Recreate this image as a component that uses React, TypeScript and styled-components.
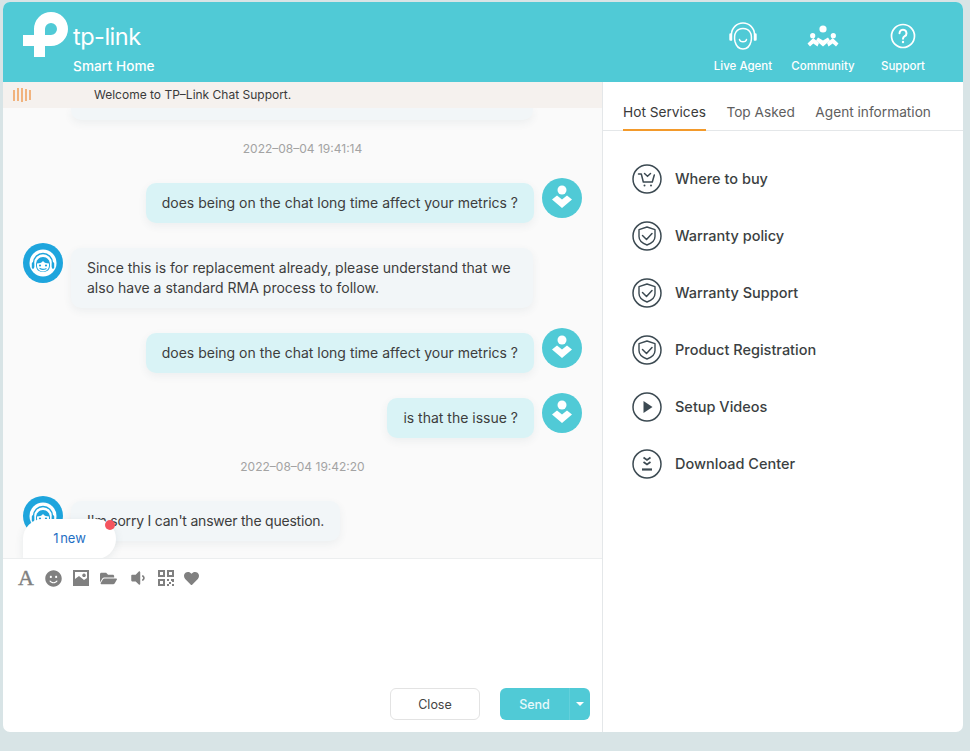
import React from 'react'
import styled, {createGlobalStyle} from 'styled-components'
import {FaFolderOpen, FaHeart, FaSmile, FaVolumeDown} from 'react-icons/fa'

const GlobalStyle = createGlobalStyle`
  html, body {
    margin: 0;
    padding: 0;
    background: #d8e4e6;
    font-family: Inter, "Liberation Sans", Arial, sans-serif;
  }
`

const Page = styled.div`
  width: 970px;
  height: 751px;
  padding: 2px 0 0 3px;
  box-sizing: border-box;
  overflow: hidden;
`

const Card = styled.div`
  width: 960px;
  height: 730px;
  background: #fff;
  border-radius: 7px;
  overflow: hidden;
  display: flex;
  flex-direction: column;
`

const Header = styled.header`
  height: 80px;
  flex: none;
  background: #50cad6;
  display: flex;
  justify-content: space-between;
  padding: 0 20px;
  color: #fff;
`

const Brand = styled.div`
  display: flex;
  gap: 4px;
  padding-top: 10px;
`

const BrandText = styled.div`
  display: flex;
  flex-direction: column;
  padding-top: 9px;
`

const LogoWord = styled.span`
  font-size: 23.5px;
  line-height: 32px;
  font-weight: 400;
  letter-spacing: -0.5px;
`

const Subtitle = styled.span`
  font-size: 13.6px;
  line-height: 20px;
  font-weight: 500;
  margin-top: 3px;
  letter-spacing: 0.1px;
`

const Nav = styled.nav`
  display: flex;
`

const NavItem = styled.div`
  width: 80px;
  display: flex;
  flex-direction: column;
  align-items: center;
  padding-top: 19px;
  gap: 7px;
  font-size: 11.5px;
  line-height: 16px;
  font-weight: 500;
`

const Body = styled.div`
  flex: 1;
  display: flex;
  min-height: 0;
`

const Left = styled.section`
  width: 599px;
  flex: none;
  display: flex;
  flex-direction: column;
  border-right: 1px solid #e4e7e9;
`

const Banner = styled.div`
  height: 26px;
  flex: none;
  box-sizing: border-box;
  background: #f5f1ee;
  display: flex;
  align-items: center;
  padding: 0 0 1px 10px;
  font-size: 12px;
  color: #3a3a3a;
`

const BannerText = styled.span`
  margin-left: 63px;
`

const Chat = styled.div`
  position: relative;
  height: 451px;
  flex: none;
  background: #fafafa;
  overflow: hidden;
  box-sizing: border-box;
  border-bottom: 1px solid #eceeef;
`

const ChatList = styled.div`
  display: flex;
  flex-direction: column;
  gap: 25px;
  padding: 0 20px;
`

const ClippedBubble = styled.div`
  height: 12px;
  margin: 0 49px 0 48px;
  background: #f2f6f8;
  border-radius: 0 0 10px 10px;
  box-shadow: 0 3px 8px rgba(60, 90, 100, 0.07);
`

const Time = styled.div`
  height: 20px;
  box-sizing: border-box;
  margin-top: -7px;
  padding-top: 1px;
  text-align: center;
  font-size: 12px;
  line-height: 20px;
  color: #a3a3a3;
`

const Row = styled.div<{ $mine?: boolean }>`
  display: flex;
  gap: 8px;
  justify-content: ${p => p.$mine ? 'flex-end' : 'flex-start'};
`

const Bubble = styled.div<{ $mine?: boolean, $tight?: boolean }>`
  padding: 10px 16px;
  max-width: 430px;
  border-radius: 10px;
  font-size: 14px;
  line-height: 20px;
  letter-spacing: ${p => p.$tight ? '-0.22px' : '0'};
  color: #3d3d3d;
  background: ${p => p.$mine ? '#d9f3f6' : '#f2f6f8'};
  box-shadow: 0 3px 8px rgba(60, 90, 100, 0.07);
`

const Avatar = styled.div<{ $mine?: boolean }>`
  width: 40px;
  height: 40px;
  flex: none;
  border-radius: 50%;
  display: flex;
  align-items: center;
  justify-content: center;
  background: ${p => p.$mine ? '#50cad6' : '#1ea5dd'};
  margin-top: -5px;
`

const NewBadge = styled.div`
  position: absolute;
  left: 20px;
  bottom: -1px;
  width: 93px;
  height: 40px;
  box-sizing: border-box;
  padding-bottom: 2px;
  background: #fff;
  border-radius: 20px 20px 20px 0;
  box-shadow: 0 2px 8px rgba(60, 90, 100, 0.1);
  display: flex;
  align-items: center;
  justify-content: center;
  font-size: 13px;
  word-spacing: -2px;
  color: #1f6fc4;
`

const RedDot = styled.span`
  position: absolute;
  right: 1px;
  top: 1px;
  width: 10px;
  height: 10px;
  border-radius: 50%;
  background: #f4545f;
`

const Composer = styled.div`
  flex: 1;
  display: flex;
  flex-direction: column;
  justify-content: space-between;
  padding: 9px 12px 12px 12px;
`

const Tools = styled.div`
  display: flex;
  align-items: center;
  height: 20px;
  color: #808080;
`

const Tool = styled.span<{ $w: number }>`
  width: ${p => p.$w}px;
  display: flex;
  justify-content: center;
  align-items: center;
`

const FontTool = styled(Tool)`
  font-family: "Liberation Serif", serif;
  font-size: 22px;
  -webkit-text-stroke: 0.4px #808080;
`

const Actions = styled.div`
  display: flex;
  justify-content: flex-end;
  gap: 20px;
`

const CloseButton = styled.button`
  width: 90px;
  height: 32px;
  background: #fff;
  border: 1px solid #e3e3e3;
  border-radius: 6px;
  font: inherit;
  font-size: 12.5px;
  color: #444;
`

const SendGroup = styled.div`
  width: 90px;
  height: 32px;
  display: flex;
  background: #50cad6;
  border-radius: 6px;
  color: #e6f9fb;
  font-size: 12.5px;
  font-weight: 500;
`

const SendLabel = styled.span`
  width: 69px;
  display: flex;
  align-items: center;
  justify-content: center;
  border-right: 1px solid #62d0db;
`

const SendCaret = styled.span`
  flex: 1;
  display: flex;
  align-items: center;
  justify-content: center;

  &::after {
    content: '';
    border: 4px solid transparent;
    border-top-color: #fff;
    border-bottom-width: 0;
  }
`

const Right = styled.aside`
  flex: 1;
  display: flex;
  flex-direction: column;
`

const Tabs = styled.div`
  height: 49px;
  flex: none;
  box-sizing: border-box;
  display: flex;
  gap: 20.5px;
  padding-left: 20px;
  border-bottom: 1px solid #e4e7e9;
`

const Tab = styled.div<{ $active?: boolean }>`
  height: 49px;
  box-sizing: border-box;
  padding-top: 21px;
  font-size: 13.7px;
  line-height: 18px;
  color: ${p => p.$active ? '#3a3a3a' : '#5e5e5e'};
  border-bottom: 2px solid ${p => p.$active ? '#f39a2b' : 'transparent'};
`

const Services = styled.div`
  display: flex;
  flex-direction: column;
  gap: 27px;
  padding: 33px 0 0 29px;
`

const Service = styled.div`
  display: flex;
  align-items: center;
  gap: 13px;
  height: 30px;
  font-size: 14.5px;
  font-weight: 500;
  color: #3b3f42;
`

const ServiceLabel = styled.span`
  margin-bottom: 2px;
`

const Logo = () => (
  <svg width="46" height="46" viewBox="23 12 46 46">
    <path
      fill="#fff"
      fillRule="evenodd"
      d="M34 29A17 17 0 1 1 51 46H45V57H34V46H23V35H34ZM45 35V29A6 6 0 1 1 51 35Z"
    />
  </svg>
)

const AgentIcon = () => (
  <svg width="30" height="30" viewBox="0 0 30 30" fill="none" stroke="#fff" strokeWidth="1.5" strokeLinecap="round">
    <path d="M3.5 19V13.5a11.5 11.5 0 0 1 23 0V19"/>
    <path d="M7 20.5C5.2 12 9 7.5 15 7.5S24.8 12 23 20.5C21.8 25.5 18.5 28 15 28S8.2 25.5 7 20.5Z"/>
    <path d="M11.5 18.5c.5 3 6.5 3 7 0"/>
    <path d="M2.5 13.5v5M27.5 13.5v5" strokeWidth="2.4"/>
  </svg>
)

const CommunityIcon = () => (
  <svg width="32" height="30" viewBox="0 0 32 30" fill="#fff">
    <circle cx="16" cy="8" r="3.6"/>
    <circle cx="5.7" cy="14.7" r="2.6"/>
    <circle cx="26.3" cy="14.7" r="2.6"/>
    <path d="M11 16.5l5 3 5-3 2 3-7 6-7-6z"/>
    <path d="M.5 22.5L6.3 17l5.7 5-1.5 3.5-4.2-3-3.3 3z"/>
    <path d="M31.5 22.5L25.7 17 20 22l1.5 3.5 4.2-3 3.3 3z"/>
  </svg>
)

const HelpIcon = () => (
  <svg width="30" height="30" viewBox="0 0 30 30" fill="none" stroke="#fff" strokeWidth="1.7" strokeLinecap="round">
    <circle cx="15" cy="15" r="11.5"/>
    <path d="M11.5 12.2a3.5 3.5 0 1 1 5.3 3c-1.2.7-1.8 1.3-1.8 2.6" strokeWidth="2"/>
    <circle cx="15" cy="21" r="1.2" fill="#fff" stroke="none"/>
  </svg>
)

const SoundBars = () => (
  <svg width="18" height="16" viewBox="0 0 18 16" stroke="#ee8a33" strokeWidth="1.2">
    <path d="M1 3v11M5 1v13M9 1v14M13 2v12M17 3v10"/>
  </svg>
)

const UserFace = () => (
  <svg width="24" height="28" viewBox="0 0 24 28" fill="#fff">
    <circle cx="12" cy="6" r="4.5"/>
    <path d="M2 15.5l5-4 5 4 5-4 5 4-10 8.5z"/>
  </svg>
)

const AgentFace = () => (
  <svg width="34" height="34" viewBox="0 0 34 34" fill="none">
    <circle cx="17" cy="17" r="13.5" fill="#fff"/>
    <path d="M7.5 21v-4a9.5 9.5 0 0 1 19 0v4" stroke="#1ea5dd" strokeWidth="1.4"/>
    <path d="M10 19c0-5 3-8 7-8s7 3 7 8-3 7-7 7-7-2-7-7z" fill="#1ea5dd"/>
    <path d="M11 17.5c2.5 0 4.5-.7 6-2.5 1.5 1.8 3.5 2.5 6 2.5v2c0 3.5-2.7 6-6 6s-6-2.5-6-6z" fill="#fff"/>
    <circle cx="14" cy="19.5" r="1.1" fill="#1ea5dd"/>
    <circle cx="20" cy="19.5" r="1.1" fill="#1ea5dd"/>
    <path d="M14 22.5c1.5 1 4 1 6 .2" stroke="#1ea5dd" strokeWidth="1.2" strokeLinecap="round"/>
    <path d="M7 17.5v4M27 17.5v4" stroke="#1ea5dd" strokeWidth="2.4" strokeLinecap="round"/>
  </svg>
)

const ImageIcon = () => (
  <svg width="16" height="16" viewBox="0 0 16 16">
    <path fill="currentColor" fillRule="evenodd" d="M0 0h16v16H0zM2 2v7l4-3 5 4 3-2V2zM11 3.5a1.8 1.8 0 1 0 .01 0z"/>
  </svg>
)

const QrIcon = () => (
  <svg width="16" height="16" viewBox="0 0 16 16">
    <path
      fill="currentColor"
      fillRule="evenodd"
      d="M0 0h7v7H0zM2 2v3h3V2zM9 0h7v7H9zM11 2v3h3V2zM0 9h7v7H0zM2 11v3h3v-3zM9 9h2v2H9zM13 9h3v3h-2v-1h-1zM11 12h2v2h-2zM9 14h2v2H9zM14 14h2v2h-2z"
    />
  </svg>
)

const Ring = ({children}: { children: React.ReactNode }) => (
  <svg width="30" height="30" viewBox="0 0 30 30" fill="none" stroke="#3c4a52" strokeWidth="1.5">
    <circle cx="15" cy="15" r="14"/>
    {children}
  </svg>
)

const CartIcon = () => (
  <Ring>
    <path d="M6.5 10h2.8l2 8h9l2-7" strokeWidth="1.5" strokeLinecap="round" strokeLinejoin="round"/>
    <path d="M12.5 9.5l3 2.8 3-2.8" strokeWidth="1.5" strokeLinecap="round"/>
    <circle cx="12.5" cy="21.5" r="1" fill="#3c4a52" stroke="none"/>
    <circle cx="19" cy="21.5" r="1" fill="#3c4a52" stroke="none"/>
  </Ring>
)

const ShieldIcon = () => (
  <Ring>
    <path d="M15 6l8 2.7v6.8c0 4-3.7 7-8 8.5-4.3-1.5-8-4.5-8-8.500V8.7z" strokeWidth="1.4" strokeLinejoin="round"/>
    <path d="M10.5 14.5l4 4 5.5-6" strokeWidth="1.5" strokeLinecap="round" strokeLinejoin="round"/>
  </Ring>
)

const PlayIcon = () => (
  <Ring>
    <path d="M11.5 9v12l9-6z" fill="#3c4a52" stroke="none"/>
  </Ring>
)

const DownloadIcon = () => (
  <Ring>
    <path d="M11.5 8.5l3.5 2.5 3.5-2.5M11.5 13l3.5 2.5 3.5-2.5" strokeWidth="1.7"/>
    <path d="M10 20.5h10" strokeWidth="2.2"/>
  </Ring>
)

const services = [
  {label: 'Where to buy', icon: <CartIcon/>},
  {label: 'Warranty policy', icon: <ShieldIcon/>},
  {label: 'Warranty Support', icon: <ShieldIcon/>},
  {label: 'Product Registration', icon: <ShieldIcon/>},
  {label: 'Setup Videos', icon: <PlayIcon/>},
  {label: 'Download Center', icon: <DownloadIcon/>},
]

const Mine = ({text}: { text: string }) => (
  <Row $mine>
    <Bubble $mine>{text}</Bubble>
    <Avatar $mine><UserFace/></Avatar>
  </Row>
)

const Theirs = ({text, tight}: { text: string, tight?: boolean }) => (
  <Row>
    <Avatar><AgentFace/></Avatar>
    <Bubble $tight={tight}>{text}</Bubble>
  </Row>
)

export default function App() {
  const question = 'does being on the chat long time affect your metrics ?'

  return (
    <Page>
      <GlobalStyle/>
      <Card>
        <Header>
          <Brand>
            <Logo/>
            <BrandText>
              <LogoWord>tp-link</LogoWord>
              <Subtitle>Smart Home</Subtitle>
            </BrandText>
          </Brand>
          <Nav>
            <NavItem><AgentIcon/>Live Agent</NavItem>
            <NavItem><CommunityIcon/>Community</NavItem>
            <NavItem><HelpIcon/>Support</NavItem>
          </Nav>
        </Header>
        <Body>
          <Left>
            <Banner>
              <SoundBars/>
              <BannerText>Welcome to TP–Link Chat Support.</BannerText>
            </Banner>
            <Chat>
              <ChatList>
                <ClippedBubble/>
                <Time>2022–08–04 19:41:14</Time>
                <Mine text={question}/>
                <Theirs text="Since this is for replacement already, please understand that we also have a standard RMA process to follow."/>
                <Mine text={question}/>
                <Mine text="is that the issue ?"/>
                <Time>2022–08–04 19:42:20</Time>
                <Theirs tight text="I'm sorry I can't answer the question."/>
              </ChatList>
              <NewBadge>1 new<RedDot/></NewBadge>
            </Chat>
            <Composer>
              <Tools>
                <FontTool $w={22}>A</FontTool>
                <Tool $w={32}><FaSmile size={17}/></Tool>
                <Tool $w={24}><ImageIcon/></Tool>
                <Tool $w={30}><FaFolderOpen size={17}/></Tool>
                <Tool $w={30}><FaVolumeDown size={18}/></Tool>
                <Tool $w={25}><QrIcon/></Tool>
                <Tool $w={27}><FaHeart size={15}/></Tool>
              </Tools>
              <Actions>
                <CloseButton>Close</CloseButton>
                <SendGroup>
                  <SendLabel>Send</SendLabel>
                  <SendCaret/>
                </SendGroup>
              </Actions>
            </Composer>
          </Left>
          <Right>
            <Tabs>
              <Tab $active>Hot Services</Tab>
              <Tab>Top Asked</Tab>
              <Tab>Agent information</Tab>
            </Tabs>
            <Services>
              {services.map(s => (
                <Service key={s.label}>{s.icon}<ServiceLabel>{s.label}</ServiceLabel></Service>
              ))}
            </Services>
          </Right>
        </Body>
      </Card>
    </Page>
  )
}
